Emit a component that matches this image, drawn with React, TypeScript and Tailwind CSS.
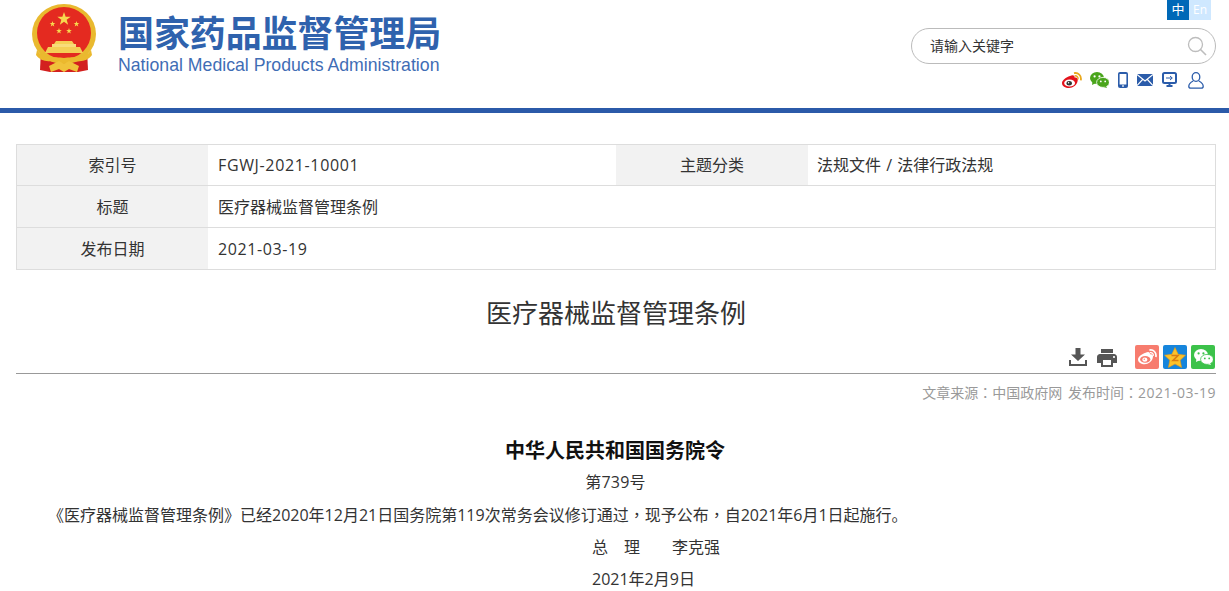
import { MdPrint } from 'react-icons/md';

function Emblem() {
  const star = (cx: number, cy: number, r: number) => {
    const pts = [];
    for (let i = 0; i < 10; i++) {
      const rad = i % 2 === 0 ? r : r * 0.4;
      const a = -Math.PI / 2 + (i * Math.PI) / 5;
      pts.push(`${cx + rad * Math.cos(a)},${cy + rad * Math.sin(a)}`);
    }
    return <polygon points={pts.join(' ')} fill="#f7d84e" />;
  };
  return (
    <svg width="64" height="68" viewBox="0 0 64 68">
      <path d="M9 46 L8 66 L18 68 L46 68 L56 66 L55 46 Z" fill="#d3201f" />
      <ellipse cx="32" cy="30" rx="32" ry="30" fill="#e9b92f" />
      <ellipse cx="32" cy="29" rx="27" ry="26" fill="#e42a20" />
      {star(32, 15, 7)}
      {star(20.5, 20, 3)}
      {star(44.5, 20, 3)}
      {star(27, 27, 3)}
      {star(37, 27, 3)}
      <path d="M24 37 H40 L42 40 H22 Z" fill="#f6cf55" />
      <rect x="20" y="40" width="24" height="3" fill="#f8dc7a" />
      <path d="M16 43 H48 L51 49 H13 Z" fill="#f4cf56" />
      <path d="M5 46 C12 56 22 52 32 54 C42 52 52 56 59 46 L60 51 C54 60 42 56 32 59 C22 56 10 60 4 51 Z" fill="#ebb92e" />
      <path d="M17 62 L27 57 L32 60 L37 57 L47 62 L45 68 L37 65 L32 68 L27 65 L19 68 Z" fill="#f0c23a" />
    </svg>
  );
}

function WeiboMark(props: { body: string; hole: string; eye: string; arc: string; size: number }) {
  return (
    <svg width={props.size} height={(props.size * 16) / 20} viewBox="0 0 20 16">
      <path d="M8 4 C10.5 2.6 12.8 3 12.6 5.6 C15 5 16.4 6.6 15.6 9 C15 13 11 16 7 16 C3.4 16 0 14.2 0 11 C0 8.4 4 5.2 8 4 Z" fill={props.body} />
      <ellipse cx="7.6" cy="11" rx="5.4" ry="3.6" fill={props.hole} />
      <ellipse cx="7.2" cy="11.2" rx="2.7" ry="2.2" fill={props.eye} />
      <circle cx="6.6" cy="10.8" r="0.7" fill={props.hole} />
      <path d="M12 1.2 C16 0.2 19.8 3.6 18.8 8.4" fill="none" stroke={props.arc} strokeWidth="1.8" />
      <path d="M12.6 3.8 C15 3.4 16.6 5.4 16 7.4" fill="none" stroke={props.arc} strokeWidth="1.3" />
    </svg>
  );
}

function WechatMark(props: { fill: string; cut: string; size: number }) {
  return (
    <svg width={props.size} height={(props.size * 16) / 19} viewBox="0 0 19 16">
      <ellipse cx="7" cy="6" rx="7" ry="6" fill={props.fill} />
      <path d="M2.5 9.5 L2 13 L6 11 Z" fill={props.fill} />
      <ellipse cx="13" cy="10.4" rx="6.4" ry="5" fill={props.fill} stroke={props.cut} strokeWidth="0.8" />
      <path d="M16 14 L17 16 L13.5 15 Z" fill={props.fill} />
      <circle cx="4.6" cy="4.4" r="1.1" fill={props.cut} />
      <circle cx="9.4" cy="4.4" r="1.1" fill={props.cut} />
      <circle cx="10.8" cy="9.4" r="0.9" fill={props.cut} />
      <circle cx="15.2" cy="9.4" r="0.9" fill={props.cut} />
    </svg>
  );
}

function HeaderIcons() {
  const blue = '#2b5caa';
  return (
    <div className="mt-[8px] flex h-[16px] items-center justify-end pr-[12px]">
      <span className="mr-[8px]">
        <WeiboMark body="#e3121b" hole="#fff" eye="#333" arc="#e9a81c" size={20} />
      </span>
      <span className="mr-[9px]">
        <WechatMark fill="#4aa51c" cut="#fff" size={19} />
      </span>
      <svg className="mr-[9px]" width="10" height="16" viewBox="0 0 10 16">
        <rect x="0" y="0" width="10" height="16" rx="2" fill={blue} />
        <rect x="1.6" y="2" width="6.8" height="10.5" fill="#fff" />
        <rect x="4" y="13.4" width="2" height="1.2" fill="#fff" />
      </svg>
      <svg className="mr-[9px]" width="16" height="12" viewBox="0 0 16 12">
        <rect width="16" height="12" fill={blue} />
        <path d="M0 0.5 L8 7 L16 0.5 M0 11.5 L5.6 5.5 M16 11.5 L10.4 5.5" stroke="#fff" strokeWidth="1.1" fill="none" />
      </svg>
      <svg className="mr-[11px]" width="15" height="16" viewBox="0 0 15 16">
        <rect x="1" y="1" width="13" height="10" rx="1.5" fill="none" stroke={blue} strokeWidth="2" />
        <path d="M4 6 H10 M8 4 L10.3 6 L8 8" stroke={blue} strokeWidth="1" fill="none" />
        <path d="M6.5 11 H8.5 V13 H10.5 V15 H4.5 V13 H6.5 Z" fill={blue} />
      </svg>
      <svg width="16" height="17" viewBox="0 0 16 17">
        <ellipse cx="8" cy="5" rx="3.8" ry="4.3" fill="none" stroke={blue} strokeWidth="1.3" />
        <path d="M5.2 9 C2.4 10.4 0.8 12.4 0.8 14.2 C0.8 15.4 1.7 16.2 2.8 16.2 H13.2 C14.3 16.2 15.2 15.4 15.2 14.2 C15.2 12.4 13.6 10.4 10.8 9" fill="none" stroke={blue} strokeWidth="1.3" />
      </svg>
    </div>
  );
}

function Header() {
  return (
    <header className="h-[113px] border-b-[5px] border-[#2b5aa9]">
      <div className="flex h-[108px] justify-between">
        <div className="flex items-start pl-[32px] pt-[4px]">
          <Emblem />
          <div className="ml-[22px] mt-[5px] text-[#2f62ad]">
            <div className='whitespace-nowrap font-["Noto_Sans_CJK_SC",sans-serif] text-[36px] font-bold leading-[44px] tracking-[-0.1px]'>国家药品监督管理局</div>
            <div className='mt-[1px] whitespace-nowrap font-["Liberation_Sans",sans-serif] text-[17.7px] leading-[22px] text-[#3f6db5]'>National Medical Products Administration</div>
          </div>
        </div>
        <div className="w-[318px] pr-[13px]">
          <div className="flex justify-end pr-[5px]">
            <span className="flex h-[20px] w-[22px] items-center justify-center bg-[#0068b7] text-[13px] text-white">中</span>
            <span className="flex h-[20px] w-[22px] items-center justify-center bg-[#cfe8ff] text-[12px] text-white">En</span>
          </div>
          <div className="mt-[8px] flex h-[36px] items-center justify-between rounded-[18px] border border-[#bbb] pl-[18px] pr-[8px]">
            <span className="-mt-[2px] text-[14px] text-[#333]">请输入关键字</span>
            <svg width="20" height="20" viewBox="0 0 20 20">
              <circle cx="8.5" cy="8.5" r="7" fill="none" stroke="#bdbdbd" strokeWidth="1.3" />
              <path d="M13.5 13.5 L19 19" stroke="#bdbdbd" strokeWidth="1.6" />
            </svg>
          </div>
          <HeaderIcons />
        </div>
      </div>
    </header>
  );
}

const labelCell = 'flex items-center justify-center bg-[#f2f2f2] text-[#333]';
const valueCell = 'flex items-center pl-[10px] text-[#333]';

function InfoTable() {
  return (
    <div className="ml-4 mt-[31px] w-[1200px] border border-[#ddd] text-[16px]">
      <div className="grid h-[41px] grid-cols-[191px_408px_192px_1fr] border-b border-[#ddd]">
        <div className={labelCell}>索引号</div>
        <div className={`${valueCell} tracking-[0.65px]`}>FGWJ-2021-10001</div>
        <div className={labelCell}>主题分类</div>
        <div className="flex items-center pl-[9px] text-[#333] [word-spacing:1px]">法规文件 / 法律行政法规</div>
      </div>
      <div className="grid h-[42px] grid-cols-[191px_1fr] border-b border-[#ddd]">
        <div className={labelCell}>标题</div>
        <div className={valueCell}>医疗器械监督管理条例</div>
      </div>
      <div className="grid h-[41px] grid-cols-[191px_1fr]">
        <div className={labelCell}>发布日期</div>
        <div className={`${valueCell} tracking-[0.6px]`}>2021-03-19</div>
      </div>
    </div>
  );
}

function Toolbar() {
  return (
    <div className="ml-4 mt-[12px] flex h-[29px] w-[1200px] items-start justify-end border-b border-[#999] pr-[1px]">
      <svg className="mr-[8px] mt-[3px]" width="18" height="18" viewBox="0 0 18 18">
        <path d="M6.5 0 H11.5 V6.5 H16 L9 13 L2 6.5 H6.5 Z" fill="#555" />
        <path d="M1 12 V17 H17 V12" fill="none" stroke="#555" strokeWidth="2" />
      </svg>
      <MdPrint className="mr-[16px] mt-[1px] text-[24px] text-[#555]" />
      <span className="mr-[4px] flex h-[24px] w-[24px] items-center justify-center rounded-[2px] bg-[#f77c6e]">
        <WeiboMark body="#fff" hole="#f77c6e" eye="#fff" arc="#fff" size={19} />
      </span>
      <span className="mr-[4px] flex h-[24px] w-[24px] items-center justify-center rounded-[2px] bg-[#1685dc]">
        <svg width="22" height="21" viewBox="0 0 22 21">
          <polygon points="11,0.5 14.2,7.3 21.5,8.2 16.2,13.2 17.6,20.5 11,17 4.4,20.5 5.8,13.2 0.5,8.2 7.8,7.3" fill="#fbc22b" stroke="#e89a14" strokeWidth="0.6" />
          <path d="M7.5 8.5 H14 L9 13.5 H14.5" fill="none" stroke="#d97d12" strokeWidth="1.6" />
        </svg>
      </span>
      <span className="flex h-[24px] w-[24px] items-center justify-center rounded-[2px] bg-[#3cc24a]">
        <WechatMark fill="#fff" cut="#3cc24a" size={19} />
      </span>
    </div>
  );
}

const tc = 'font-["Noto_Sans_CJK_TC",sans-serif]';

export default function App() {
  return (
    <div className='h-[591px] overflow-hidden bg-white font-["Open_Sans","Noto_Sans_CJK_SC",sans-serif]'>
      <Header />
      <InfoTable />
      <h1 className="ml-4 mt-[23px] w-[1200px] text-center text-[26px] font-normal leading-[40px] text-[#333]">医疗器械监督管理条例</h1>
      <Toolbar />
      <div className="ml-4 mt-[8px] w-[1200px] text-right text-[14px] leading-[20px] text-[#999] [word-spacing:2px]">
        文章来源<span className={tc}>：</span>中国政府网 发布时间<span className={tc}>：</span><span className="tracking-[0.5px]">2021-03-19</span>
      </div>
      <article className="ml-4 mt-[31px] w-[1200px] text-[16px] leading-[32px] text-[#333]">
        <p className="pr-[2px] text-center text-[20px] font-bold leading-[33px] text-[#111]">中华人民共和国国务院令</p>
        <p className="pr-[1px] text-center leading-[31px] tracking-[0.2px]">第739号</p>
        <p className="indent-[32px]">
          《医疗器械监督管理条例》已经2020年12月21日国务院第119次常务会议修订通过<span className={tc}>，</span>现予公布<span className={tc}>，</span>自2021年6月1日起施行。
        </p>
        <p className="ml-[576px] whitespace-pre">总　理　　李克强</p>
        <p className="ml-[576px]">2021年2月9日</p>
      </article>
    </div>
  );
}
